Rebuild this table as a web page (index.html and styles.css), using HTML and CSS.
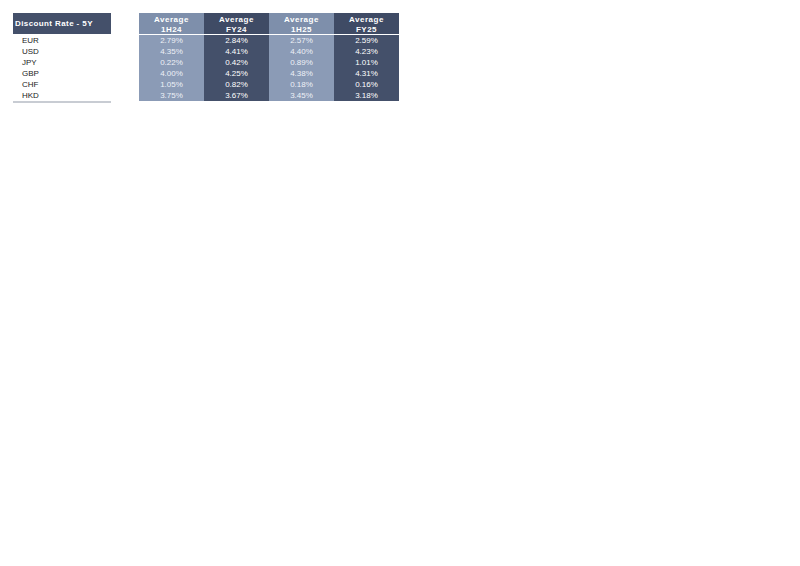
FILE: index.html
```html
<!DOCTYPE html>
<html>
<head>
<meta charset="utf-8">
<link rel="stylesheet" href="styles.css">
</head>
<body>
<div class="page">
  <div class="left">
    <div class="lhead">Discount Rate - 5Y</div>
    <div class="lrows">
      <div class="lrow">EUR</div>
      <div class="lrow">USD</div>
      <div class="lrow">JPY</div>
      <div class="lrow">GBP</div>
      <div class="lrow">CHF</div>
      <div class="lrow">HKD</div>
    </div>
  </div>
  <div class="right">
    <div class="col light">
      <div class="chead">Average<br>1H24</div>
      <div class="cdata"><div>2.79%</div><div>4.35%</div><div>0.22%</div><div>4.00%</div><div>1.05%</div><div>3.75%</div></div>
    </div>
    <div class="col dark">
      <div class="chead">Average<br>FY24</div>
      <div class="cdata"><div>2.84%</div><div>4.41%</div><div>0.42%</div><div>4.25%</div><div>0.82%</div><div>3.67%</div></div>
    </div>
    <div class="col light">
      <div class="chead">Average<br>1H25</div>
      <div class="cdata"><div>2.57%</div><div>4.40%</div><div>0.89%</div><div>4.38%</div><div>0.18%</div><div>3.45%</div></div>
    </div>
    <div class="col dark">
      <div class="chead">Average<br>FY25</div>
      <div class="cdata"><div>2.59%</div><div>4.23%</div><div>1.01%</div><div>4.31%</div><div>0.16%</div><div>3.18%</div></div>
    </div>
  </div>
</div>
</body>
</html>
```

FILE: styles.css
```css
html, body {
  margin: 0;
  padding: 0;
  background: #ffffff;
}
.page {
  display: flex;
  align-items: flex-start;
  padding: 13px 0 0 13px;
  gap: 28px;
  font-family: "Liberation Sans", Arial, sans-serif;
}
.left {
  width: 98px;
  display: flex;
  flex-direction: column;
}
.lhead {
  height: 22px;
  background: #44506a;
  color: #ffffff;
  font-size: 8px;
  font-weight: bold;
  letter-spacing: 0.4px;
  line-height: 22px;
  padding-left: 2px;
  white-space: nowrap;
  box-sizing: border-box;
  border-bottom: 1px solid #ffffff;
}
.lrows {
  border-bottom: 2px solid #c8ccd3;
}
.lrow {
  height: 11px;
  line-height: 11px;
  font-size: 8px;
  color: #222222;
  padding-left: 9px;
}
.right {
  display: flex;
  width: 260px;
}
.col {
  width: 65px;
  display: flex;
  flex-direction: column;
  text-align: center;
  color: #ffffff;
}
.chead {
  height: 23px;
  font-size: 8px;
  font-weight: bold;
  letter-spacing: 0.5px;
  line-height: 10px;
  padding-top: 2px;
  box-sizing: border-box;
  border-bottom: 2px solid #ffffff;
  margin-bottom: -1px;
}
.cdata {
  font-size: 8px;
  line-height: 11px;
}
.cdata div {
  height: 11px;
}
.light .chead { background: #7e8fab; }
.light .cdata { background: #8b9bb6; color: #eef1f6; }
.dark .chead { background: #3f4b65; }
.dark .cdata { background: #44506a; color: #ffffff; }
```
